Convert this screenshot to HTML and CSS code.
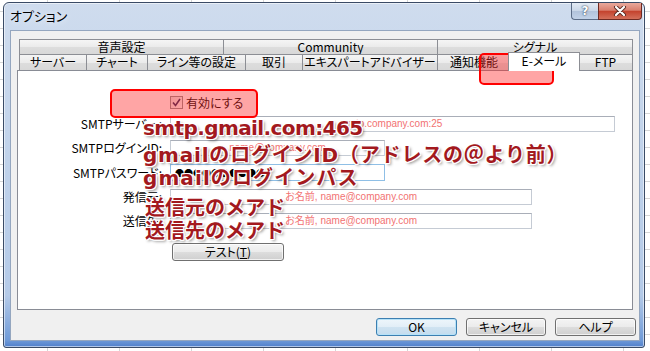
FILE: index.html
```html
<!DOCTYPE html>
<html lang="ja">
<head>
<meta charset="utf-8">
<title>オプション</title>
<link rel="stylesheet" href="styles.css">
</head>
<body>
<div class="window">
  <div class="titlebar">
    <span class="title">オプション</span>
    <div class="caption-btns">
      <span class="cbtn help">?</span>
      <span class="cbtn close">
        <svg width="16" height="10" viewBox="0 0 16 10"><path d="M4 1 L12 9 M12 1 L4 9" stroke="#5a2a22" stroke-width="4" stroke-linecap="round"/><path d="M4 1 L12 9 M12 1 L4 9" stroke="#fff" stroke-width="2.2" stroke-linecap="round"/></svg>
      </span>
    </div>
  </div>
  <div class="client">
    <div class="tabs">
      <div class="tabrow upper">
        <div class="tab w204">音声設定</div>
        <div class="tab w214">Community</div>
        <div class="tab w196 last">シグナル</div>
      </div>
      <div class="tabrow lower">
        <div class="tab w67">サーバー</div>
        <div class="tab w61">チャート</div>
        <div class="tab w98">ライン等の設定</div>
        <div class="tab w57">取引</div>
        <div class="tab w135">エキスパートアドバイザー</div>
        <div class="tab w73">通知機能</div>
        <div class="tab selected">E-メール</div>
        <div class="tab w55 last">FTP</div>
      </div>
    </div>
    <div class="panel">
      <div class="row check-row">
        <span></span>
        <label class="check"><span class="box"><svg width="9" height="9" viewBox="0 0 9 9"><path d="M1 4.5 L3.5 7.5 L8 1" fill="none" stroke="#2a2a5a" stroke-width="1.6"/></svg></span>有効にする</label>
      </div>
      <div class="row r-server">
        <span class="lbl">SMTPサーバー:</span>
        <span class="field w445">smtp.company.com:25</span>
      </div>
      <div class="row r-gap">
        <span class="lbl">SMTPログインID:</span>
        <span class="field w215">name@company.com</span>
      </div>
      <div class="row r-gap">
        <span class="lbl">SMTPパスワード:</span>
        <span class="field w215 pass">●●●●●●●●●●</span>
      </div>
      <div class="row r-gap">
        <span class="lbl">発信元:</span>
        <span class="field w362">お名前, name@company.com</span>
      </div>
      <div class="row r-gap">
        <span class="lbl">送信先:</span>
        <span class="field w362">お名前, name@company.com</span>
      </div>
      <div class="row r-test">
        <span></span>
        <span class="btn test">テスト(<u>T</u>)</span>
      </div>
    </div>
    <div class="dialog-btns">
      <span class="btn dbtn default">OK</span>
      <span class="btn dbtn w80">キャンセル</span>
      <span class="btn dbtn">ヘルプ</span>
    </div>
  </div>
</div>

<div class="hl hl-check"></div>
<div class="hl hl-tab"></div>

<div class="note n1">smtp.gmail.com:465</div>
<div class="note n2">gmailのログインID（アドレスの＠より前）</div>
<div class="note n3">gmailのログインパス</div>
<div class="note n4">送信元のメアド</div>
<div class="note n5">送信先のメアド</div>
</body>
</html>
```

FILE: styles.css
```css
body {
  margin: 0;
  width: 650px;
  height: 351px;
  overflow: hidden;
  position: relative;
  background-color: #fff;
  background-image:
    linear-gradient(90deg, #d6d6d6 1px, transparent 1px),
    linear-gradient(#d6d6d6 1px, transparent 1px);
  background-size: 72px 100%, 100% 17px;
  background-position: 47px 0, 0 11px;
  font-family: "Noto Sans CJK JP", sans-serif;
  color: #000;
}

.window {
  margin: 2px 0 0 3px;
  width: 642px;
  height: 346px;
  box-sizing: border-box;
  border: 1px solid #3a4b66;
  border-radius: 6px 6px 3px 3px;
  background: linear-gradient(180deg, #cfdcee 0%, #c0d2ea 45%, #b4cae8 85%, #6f9ad8 98%, #4f7fcb 100%);
  box-shadow: inset 0 0 0 1px rgba(255, 255, 255, 0.55);
}

.titlebar {
  height: 27px;
  display: flex;
  align-items: flex-start;
  padding-left: 6px;
}

.title {
  flex: 1;
  font-size: 13px;
  line-height: 25px;
  font-feature-settings: "palt";
  text-shadow: 0 0 6px rgba(255, 255, 255, 0.95);
}

.caption-btns {
  display: flex;
  margin-right: 2px;
}

.cbtn {
  height: 17px;
  box-sizing: border-box;
  border: 1px solid #5b6c86;
  border-top: none;
  display: flex;
  align-items: center;
  justify-content: center;
}

.help {
  width: 27px;
  border-radius: 0 0 0 4px;
  border-right: none;
  background: linear-gradient(180deg, #e3eaf4 0%, #c9d6e8 50%, #b2c3db 52%, #c2d2e8 100%);
  font: bold 12px "DejaVu Sans", sans-serif;
  color: #fff;
  text-shadow: 0 0 1px #34455f, 0 0 2px #34455f;
}

.close {
  width: 44px;
  border-radius: 0 0 4px 0;
  border-color: #6e2a22;
  background: linear-gradient(180deg, #e9a99c 0%, #d9806f 45%, #c4432e 52%, #d3705b 100%);
}

.client {
  margin: 0 4px 0 6px;
  height: 311px;
  box-sizing: border-box;
  border: 1px solid #94a6bf;
  background: #f0f0f0;
  padding: 8px 6px 0 6px;
}

.tabs {
  margin-left: 2px;
}

.tabrow {
  display: flex;
  align-items: flex-end;
}

.tabrow.upper {
  height: 15px;
}

.tabrow.lower {
  height: 16px;
}

.tab {
  box-sizing: border-box;
  height: 100%;
  flex: none;
  border: 1px solid #8c8e94;
  border-right: none;
  border-bottom: none;
  background: linear-gradient(180deg, #f5f5f5 0%, #ebebeb 50%, #dddddd 51%, #d8d8d8 100%);
  font-size: 12px;
  line-height: 13px;
  text-align: center;
  font-feature-settings: "palt";
  white-space: nowrap;
  overflow: hidden;
}

.tab.last {
  border-right: 1px solid #8c8e94;
}

.tab.selected {
  position: relative;
  z-index: 1;
  width: 72px;
  height: 19px;
  margin: 0 -2px -1px -2px;
  border-right: 1px solid #8c8e94;
  background: #fff;
  line-height: 15px;
}

.w204 { width: 204px; }
.w214 { width: 214px; }
.w196 { width: 196px; }
.w67 { width: 67px; }
.w61 { width: 61px; }
.w98 { width: 98px; }
.w57 { width: 57px; }
.w135 { width: 135px; }
.w73 { width: 73px; }
.w55 { width: 55px; }

.panel {
  height: 240px;
  box-sizing: border-box;
  border: 1px solid #898c95;
  background: #fff;
  padding-top: 25px;
}

.row {
  display: grid;
  grid-template-columns: 144px auto;
  column-gap: 8px;
  align-items: center;
  justify-items: start;
}

.r-server { margin-top: 7px; }
.r-gap { margin-top: 8px; }
.r-test { margin-top: 14px; }

.lbl {
  justify-self: end;
  font-size: 12px;
  line-height: 14px;
  font-feature-settings: "palt";
  white-space: nowrap;
}

.check {
  display: flex;
  align-items: center;
  gap: 3px;
  font-size: 12px;
  line-height: 13px;
  font-feature-settings: "palt";
}

.box {
  width: 13px;
  height: 13px;
  box-sizing: border-box;
  border: 1px solid #8e8f8f;
  background: linear-gradient(135deg, #e4e4e4, #fbfbfb);
  display: flex;
  align-items: center;
  justify-content: center;
}

.field {
  display: block;
  height: 16px;
  box-sizing: border-box;
  border: 1px solid #c5cbd4;
  border-top-color: #a9aeb8;
  background: #fff;
  font: 10px/14px "Liberation Sans", "Noto Sans CJK JP", sans-serif;
  color: #f27272;
  text-align: center;
  white-space: nowrap;
  overflow: hidden;
}

.w445 { width: 445px; }
.w215 { width: 215px; }
.w362 { width: 362px; }

.field.pass {
  height: 17px;
  border-color: #8fbfe6;
  color: #000;
  text-align: left;
  padding-left: 4px;
  font: 9px/15px "Noto Sans CJK JP", sans-serif;
}

.btn {
  display: flex;
  align-items: center;
  justify-content: center;
  height: 18px;
  box-sizing: border-box;
  border: 1px solid #707070;
  border-radius: 3px;
  background: linear-gradient(180deg, #f4f4f4 0%, #ebebeb 50%, #dddddd 51%, #cfcfcf 100%);
  box-shadow: inset 0 0 0 1px rgba(255, 255, 255, 0.7);
  font-size: 12px;
  line-height: 14px;
  font-feature-settings: "palt";
}

.test {
  width: 112px;
  margin-left: 2px;
}

.dialog-btns {
  display: flex;
  justify-content: flex-end;
  gap: 9px;
  margin: 8px -3px 0 0;
}

.dbtn {
  width: 81px;
}

.dbtn.w80 {
  width: 80px;
}

.dbtn.default {
  border-color: #3c7fb1;
  box-shadow: inset 0 0 0 1px #b6e2f8;
  background: linear-gradient(180deg, #eef6fb 0%, #e2eef7 50%, #cfe3f1 51%, #c4dcee 100%);
}

.hl {
  position: absolute;
  box-sizing: border-box;
  border: 2px solid #ff0000;
  border-radius: 5px;
  background: rgba(255, 40, 40, 0.42);
}

.hl-check {
  left: 110px;
  top: 89px;
  width: 148px;
  height: 29px;
}

.hl-tab {
  left: 479px;
  top: 53px;
  width: 75px;
  height: 32px;
}

.note {
  position: absolute;
  font: bold 20px/24px "DejaVu Sans", "Noto Sans CJK JP", sans-serif;
  color: #a3191e;
  white-space: nowrap;
  text-shadow:
    -1px -1px 0 #fff, 1px -1px 0 #fff, -1px 1px 0 #fff, 1px 1px 0 #fff,
    0 -1px 0 #fff, 0 1px 0 #fff, -1px 0 0 #fff, 1px 0 0 #fff,
    2px 2px 3px rgba(0, 0, 0, 0.45);
}

.n1 { left: 143px; top: 116px; letter-spacing: -0.6px; }
.n2 { left: 143px; top: 143px; letter-spacing: 0.8px; }
.n3 { left: 143px; top: 166px; letter-spacing: 1.1px; }
.n4 { left: 145px; top: 196px; }
.n5 { left: 145px; top: 219px; }
```
